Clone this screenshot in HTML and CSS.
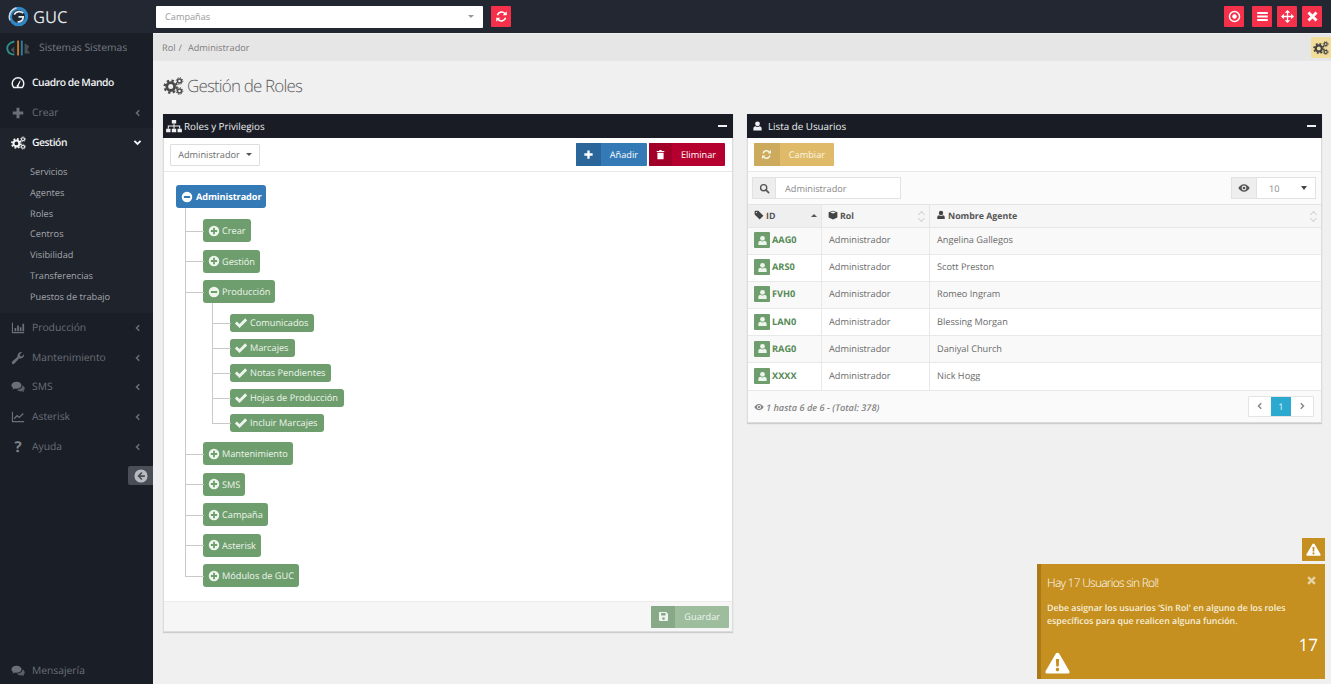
FILE: index.html
```html
<!DOCTYPE html>
<html lang="es">
<head>
<meta charset="utf-8">
<title>GUC - Gestión de Roles</title>
<link rel="stylesheet" href="styles.css">
</head>
<body>
<svg class="sprite" xmlns="http://www.w3.org/2000/svg">
  <symbol id="cogs" viewBox="0 0 20 18">
    <circle cx="7.2" cy="9.6" r="3.9" fill="none" stroke="currentColor" stroke-width="2.8"/>
    <circle cx="7.2" cy="9.6" r="6.1" fill="none" stroke="currentColor" stroke-width="2.2" stroke-dasharray="2.4 2.4"/>
    <circle cx="16" cy="4" r="2" fill="none" stroke="currentColor" stroke-width="1.5"/>
    <circle cx="16" cy="4" r="3.3" fill="none" stroke="currentColor" stroke-width="1" stroke-dasharray="1.3 1.3"/>
    <circle cx="16" cy="14" r="2" fill="none" stroke="currentColor" stroke-width="1.5"/>
    <circle cx="16" cy="14" r="3.3" fill="none" stroke="currentColor" stroke-width="1" stroke-dasharray="1.3 1.3"/>
  </symbol>
  <symbol id="gauge" viewBox="0 0 16 16">
    <path d="M3.2 13.2a6.6 6.6 0 1 1 9.6 0z" fill="none" stroke="currentColor" stroke-width="1.7" stroke-linejoin="round"/>
    <path d="M7.2 10.2 10.2 5l.9.5-2.2 5.4a1.3 1.3 0 1 1-1.7-.7z" fill="currentColor"/>
  </symbol>
  <symbol id="plus" viewBox="0 0 16 16"><path d="M6.3 2h3.4v4.3H14v3.4H9.700V14H6.300V9.700H2V6.300h4.300z" fill="currentColor"/></symbol>
  <symbol id="chart" viewBox="0 0 16 16"><path d="M1 2h1.300v10.700H15V14H1zM4 8h2v3.700H4zM7 5h2v6.700H7zM10 7h2v4.700h-2zM13 3h2v8.700h-2z" fill="currentColor"/></symbol>
  <symbol id="wrench" viewBox="0 0 16 16"><path d="M15 4.300a4.200 4.200 0 0 1-5.600 4L3.800 14.500a1.700 1.700 0 0 1-2.400-2.400L7.600 6.500a4.200 4.200 0 0 1 5-5.200L10 4l.5 1.900 1.900.5 2.400-2.700q.2.300.2.600z" fill="currentColor"/></symbol>
  <symbol id="comments" viewBox="0 0 16 16"><path d="M6.300 2C3 2 .5 3.800.5 6c0 1.200.8 2.300 2 3.100L1.700 11l2.600-1.300c.7.200 1.300.3 2 .3 3.300 0 5.700-1.800 5.700-4s-2.400-4-5.700-4z" fill="currentColor"/><path d="M13 6.200c0 2.800-3 4.700-6 4.800.8 1.200 2.600 2 4.500 2 .5 0 1-.1 1.400-.2l2.100 1-.6-1.700c.8-.7 1.300-1.500 1.300-2.500 0-1.400-1-2.600-2.700-3.400z" fill="currentColor" opacity=".8"/></symbol>
  <symbol id="line" viewBox="0 0 16 16"><path d="M1 2h1.300v10.700H15V14H1z" fill="currentColor"/><path d="M3.500 10 7 6.500l2.500 2L14 4" fill="none" stroke="currentColor" stroke-width="1.500"/></symbol>
  <symbol id="sitemap" viewBox="0 0 18 16"><path d="M6.500 1h5v4h-5zM0 11h5v4H0zM6.500 11h5v4h-5zM13 11h5v4h-5z" fill="currentColor"/><path d="M2.500 11V8h13v3M9 5v6" fill="none" stroke="currentColor" stroke-width="1.200"/></symbol>
  <symbol id="user" viewBox="0 0 16 16"><circle cx="8" cy="4.800" r="3.500" fill="currentColor"/><path d="M2 14.500v-2.700c0-2 1.400-3.200 3-3.300.8.600 1.900 1 3 1s2.200-.4 3-1c1.600.1 3 1.300 3 3.300v2.700z" fill="currentColor"/></symbol>
  <symbol id="refresh" viewBox="0 0 16 16"><path d="M3 6.500A5.300 5.300 0 0 1 12.300 4.500M13 9.500A5.300 5.300 0 0 1 3.700 11.500" fill="none" stroke="currentColor" stroke-width="2"/><path d="M14.500 1.500v5h-5zM1.500 14.500v-5h5z" fill="currentColor"/></symbol>
  <symbol id="trash" viewBox="0 0 16 16"><path d="M2.500 3H6l.5-1.500h3L10 3h3.500v1.500h-11zM3.500 5.500h9V14a1 1 0 0 1-1 1h-7a1 1 0 0 1-1-1z" fill="currentColor"/></symbol>
  <symbol id="check" viewBox="0 0 16 16"><path d="M1 8.500 3.300 6.200 6.300 9.200 12.800 2.700 15 5 6.300 13.700z" fill="currentColor"/></symbol>
  <symbol id="pluscircle" viewBox="0 0 16 16"><path fill-rule="evenodd" d="M8 1a7 7 0 1 1 0 14A7 7 0 0 1 8 1zM6.800 3.800v3H3.800v2.400h3v3h2.400v-3h3V6.800h-3v-3z" fill="currentColor"/></symbol>
  <symbol id="minuscircle" viewBox="0 0 16 16"><path fill-rule="evenodd" d="M8 1a7 7 0 1 1 0 14A7 7 0 0 1 8 1zM3.800 6.800v2.400h8.400V6.800z" fill="currentColor"/></symbol>
  <symbol id="search" viewBox="0 0 16 16"><circle cx="6.800" cy="6.800" r="4.500" fill="none" stroke="currentColor" stroke-width="2"/><path d="m10 10 4 4" stroke="currentColor" stroke-width="2.400" stroke-linecap="round"/></symbol>
  <symbol id="eye" viewBox="0 0 16 16"><path fill-rule="evenodd" d="M8 3c3.500 0 6 2.500 7.500 5C14 10.500 11.500 13 8 13S2 10.500.5 8C2 5.500 4.500 3 8 3zm0 1.800a3.200 3.200 0 1 0 0 6.400 3.200 3.200 0 0 0 0-6.400z" fill="currentColor"/><circle cx="8" cy="8" r="1.800" fill="currentColor"/></symbol>
  <symbol id="tag" viewBox="0 0 16 16"><path d="M1 2.500A1.500 1.500 0 0 1 2.500 1H7l8 8-6 6-8-8zM4 3a1 1 0 1 0 0 2.200A1 1 0 0 0 4 3z" fill="currentColor" fill-rule="evenodd"/></symbol>
  <symbol id="cube" viewBox="0 0 16 16"><path d="M8 1 15 3.500V12L8 15 1 12V3.500zM3.500 4 8 5.700 12.500 4 8 2.400z" fill="currentColor" fill-rule="evenodd"/></symbol>
  <symbol id="save" viewBox="0 0 16 16"><path fill-rule="evenodd" d="M2.500 1.500H12L14.500 4v9.500a1 1 0 0 1-1 1h-11a1 1 0 0 1-1-1v-11a1 1 0 0 1 1-1zM4.500 2.800v3.700h6.500V2.800zM8 9a2 2 0 1 0 0 4 2 2 0 0 0 0-4z" fill="currentColor"/></symbol>
  <symbol id="warn" viewBox="0 0 18 16"><path fill-rule="evenodd" d="M9 .5c.6 0 1 .3 1.300.8l7.300 12.500c.5 1 0 1.900-1.200 1.900H1.600C.4 15.700-.1 14.800.4 13.800L7.700 1.300C8 .8 8.400.5 9 .5zM7.800 5l.3 5.600h1.800L10.200 5zM9 11.500a1.300 1.300 0 1 0 0 2.600 1.300 1.300 0 0 0 0-2.600z" fill="currentColor"/></symbol>
  <symbol id="target" viewBox="0 0 16 16"><circle cx="8" cy="8" r="6.200" fill="none" stroke="currentColor" stroke-width="1.800"/><circle cx="8" cy="8" r="2.800" fill="currentColor"/></symbol>
  <symbol id="bars" viewBox="0 0 16 16"><path d="M1.500 2.500h13v2.400h-13zM1.500 6.800h13v2.400h-13zM1.500 11.100h13v2.400h-13z" fill="currentColor"/></symbol>
  <symbol id="move" viewBox="0 0 16 16"><path d="M8 0l3.500 3.500H8.800v3.700h3.700V4.500L16 8l-3.500 3.500V8.800H8.800v3.700h2.700L8 16l-3.500-3.500h2.700V8.800H3.500v2.700L0 8l3.500-3.500v2.700h3.700V3.500H4.500z" fill="currentColor"/></symbol>
  <symbol id="times" viewBox="0 0 16 16"><path d="M4.300 1.800 8 5.500l3.700-3.700 2.500 2.500L10.500 8l3.700 3.700-2.500 2.500L8 10.500l-3.700 3.700-2.500-2.500L5.500 8 1.800 4.300z" fill="currentColor"/></symbol>
  <symbol id="left" viewBox="0 0 16 16"><path d="M10.500 2.500 5 8l5.500 5.500" fill="none" stroke="currentColor" stroke-width="3"/></symbol>
  <symbol id="right" viewBox="0 0 16 16"><path d="M5.500 2.500 11 8l-5.500 5.500" fill="none" stroke="currentColor" stroke-width="3"/></symbol>
  <symbol id="down" viewBox="0 0 16 16"><path d="M2.500 5 8 10.500 13.500 5" fill="none" stroke="currentColor" stroke-width="3.400"/></symbol>
  <symbol id="back" viewBox="0 0 16 16"><path fill-rule="evenodd" d="M8 .5a7.500 7.500 0 1 1 0 15 7.500 7.500 0 0 1 0-15zM8.400 3.400 3.800 8l4.600 4.600 1.300-1.300-2.300-2.300h5V7h-5l2.300-2.300z" fill="currentColor"/></symbol>
</svg>

<div class="app">
  <header class="topbar">
    <div class="brand">
      <svg class="brand-logo" viewBox="0 0 24 22"><circle cx="12" cy="11" r="8.500" fill="none" stroke="#2f86c5" stroke-width="3.400"/><path d="M3 15C1 10 4 3 10 2" fill="none" stroke="#cfd6de" stroke-width="1.600"/><path d="M17 7.500A6 6 0 0 0 7.500 9" fill="none" stroke="#e8edf2" stroke-width="1.800"/><path d="M12 11.500h5c0 4-3.500 5.500-6 5" fill="none" stroke="#e8edf2" stroke-width="1.800"/></svg>
      <span class="brand-name">GUC</span>
    </div>
    <div class="camp-select"><span>Campañas</span><i class="caret caret-light"></i></div>
    <button class="tbtn tbtn-refresh"><svg class="i i13"><use href="#refresh"/></svg></button>
    <div class="top-actions">
      <button class="tbtn tbtn-first"><svg class="i i13"><use href="#target"/></svg></button>
      <button class="tbtn"><svg class="i i13"><use href="#bars"/></svg></button>
      <button class="tbtn"><svg class="i i13"><use href="#move"/></svg></button>
      <button class="tbtn"><svg class="i i13"><use href="#times"/></svg></button>
    </div>
  </header>

  <aside class="sidebar">
    <div class="profile">
      <svg class="avatar" viewBox="0 0 28 18"><path d="M9 2C3 3 0 8 2 12c1 3 4 4 7 4" fill="none" stroke="#2f8f8a" stroke-width="2"/><rect x="12" y="1" width="2" height="16" fill="#d07a2a"/><rect x="16" y="1" width="2" height="16" fill="#2f7f9f"/><path d="M5 11l4-4v8zM20 4l5 3-2 4 3 4h-6z" fill="#4a4f52"/></svg>
      <span>Sistemas Sistemas</span>
    </div>
    <nav class="nav">
      <a class="nav-item active"><svg class="i nav-i"><use href="#gauge"/></svg><span>Cuadro de Mando</span></a>
      <a class="nav-item"><svg class="i nav-i"><use href="#plus"/></svg><span>Crear</span><svg class="i chev"><use href="#left"/></svg></a>
      <a class="nav-item active open"><svg class="i nav-i nav-cog"><use href="#cogs"/></svg><span>Gestión</span><svg class="i chev"><use href="#down"/></svg></a>
      <ul class="subnav">
        <li>Servicios</li><li>Agentes</li><li>Roles</li><li>Centros</li><li>Visibilidad</li><li>Transferencias</li><li>Puestos de trabajo</li>
      </ul>
      <a class="nav-item"><svg class="i nav-i"><use href="#chart"/></svg><span>Producción</span><svg class="i chev"><use href="#left"/></svg></a>
      <a class="nav-item"><svg class="i nav-i"><use href="#wrench"/></svg><span>Mantenimiento</span><svg class="i chev"><use href="#left"/></svg></a>
      <a class="nav-item"><svg class="i nav-i"><use href="#comments"/></svg><span>SMS</span><svg class="i chev"><use href="#left"/></svg></a>
      <a class="nav-item"><svg class="i nav-i"><use href="#line"/></svg><span>Asterisk</span><svg class="i chev"><use href="#left"/></svg></a>
      <a class="nav-item"><b class="nav-q">?</b><span>Ayuda</span><svg class="i chev"><use href="#left"/></svg></a>
    </nav>
    <div class="collapse"><svg class="i i14"><use href="#back"/></svg></div>
    <a class="nav-item nav-bottom"><svg class="i nav-i"><use href="#comments"/></svg><span>Mensajería</span></a>
  </aside>

  <main class="main">
    <div class="crumbs"><span>Rol</span><span class="crumb-sep">/</span><span>Administrador</span></div>
    <div class="settings-tab"><svg class="i cog-tab"><use href="#cogs"/></svg></div>
    <h1 class="title"><svg class="i title-i"><use href="#cogs"/></svg><span>Gestión de Roles</span></h1>

    <div class="panels">
      <section class="panel">
        <div class="panel-head"><svg class="i head-i-wide"><use href="#sitemap"/></svg><span>Roles y Privilegios</span><span class="dash"></span></div>
        <div class="toolbar toolbar-split">
          <button class="dropdown"><span>Administrador</span><i class="caret"></i></button>
          <div class="btn-row">
            <button class="lbtn lbtn-blue"><span class="lbtn-ic"><svg class="i i11"><use href="#plus"/></svg></span><span class="lbtn-tx">Añadir</span></button>
            <button class="lbtn lbtn-red"><span class="lbtn-ic"><svg class="i i11"><use href="#trash"/></svg></span><span class="lbtn-tx">Eliminar</span></button>
          </div>
        </div>
        <div class="tree">
          <span class="node node-root"><svg class="i i12"><use href="#minuscircle"/></svg>Administrador</span>
          <ul class="tree-l1">
            <li><span class="node"><svg class="i i12"><use href="#pluscircle"/></svg>Crear</span></li>
            <li><span class="node"><svg class="i i12"><use href="#pluscircle"/></svg>Gestión</span></li>
            <li><span class="node"><svg class="i i12"><use href="#minuscircle"/></svg>Producción</span>
              <ul class="tree-l2">
                <li><span class="node node-leaf"><svg class="i i14"><use href="#check"/></svg>Comunicados</span></li>
                <li><span class="node node-leaf"><svg class="i i14"><use href="#check"/></svg>Marcajes</span></li>
                <li><span class="node node-leaf"><svg class="i i14"><use href="#check"/></svg>Notas Pendientes</span></li>
                <li><span class="node node-leaf"><svg class="i i14"><use href="#check"/></svg>Hojas de Producción</span></li>
                <li><span class="node node-leaf"><svg class="i i14"><use href="#check"/></svg>Incluir Marcajes</span></li>
              </ul>
            </li>
            <li><span class="node"><svg class="i i12"><use href="#pluscircle"/></svg>Mantenimiento</span></li>
            <li><span class="node"><svg class="i i12"><use href="#pluscircle"/></svg>SMS</span></li>
            <li><span class="node"><svg class="i i12"><use href="#pluscircle"/></svg>Campaña</span></li>
            <li><span class="node"><svg class="i i12"><use href="#pluscircle"/></svg>Asterisk</span></li>
            <li><span class="node"><svg class="i i12"><use href="#pluscircle"/></svg>Módulos de GUC</span></li>
          </ul>
        </div>
        <div class="panel-foot">
          <button class="lbtn lbtn-green"><span class="lbtn-ic"><svg class="i i11"><use href="#save"/></svg></span><span class="lbtn-tx">Guardar</span></button>
        </div>
      </section>

      <section class="panel panel-users">
        <div class="panel-head"><svg class="i head-i"><use href="#user"/></svg><span>Lista de Usuarios</span><span class="dash"></span></div>
        <div class="toolbar">
          <button class="lbtn lbtn-gold"><span class="lbtn-ic"><svg class="i i11"><use href="#refresh"/></svg></span><span class="lbtn-tx">Cambiar</span></button>
        </div>
        <div class="filters">
          <div class="igroup igroup-search"><span class="addon"><svg class="i i11"><use href="#search"/></svg></span><span class="ifield">Administrador</span></div>
          <div class="igroup igroup-len"><span class="addon"><svg class="i i12"><use href="#eye"/></svg></span><span class="ifield">10<i class="caret caret-dark"></i></span></div>
        </div>
        <table class="grid">
          <thead>
            <tr>
              <th class="col-id sorted"><svg class="i i10"><use href="#tag"/></svg>ID<i class="sort-up"></i></th>
              <th class="col-rol"><svg class="i i10"><use href="#cube"/></svg>Rol<i class="sort-both"></i></th>
              <th><svg class="i i10"><use href="#user"/></svg>Nombre Agente<i class="sort-both"></i></th>
            </tr>
          </thead>
          <tbody>
            <tr><td class="cell-id"><span class="uic"><svg class="i i11"><use href="#user"/></svg></span>AAG0</td><td>Administrador</td><td>Angelina Gallegos</td></tr>
            <tr><td class="cell-id"><span class="uic"><svg class="i i11"><use href="#user"/></svg></span>ARS0</td><td>Administrador</td><td>Scott Preston</td></tr>
            <tr><td class="cell-id"><span class="uic"><svg class="i i11"><use href="#user"/></svg></span>FVH0</td><td>Administrador</td><td>Romeo Ingram</td></tr>
            <tr><td class="cell-id"><span class="uic"><svg class="i i11"><use href="#user"/></svg></span>LAN0</td><td>Administrador</td><td>Blessing Morgan</td></tr>
            <tr><td class="cell-id"><span class="uic"><svg class="i i11"><use href="#user"/></svg></span>RAG0</td><td>Administrador</td><td>Daniyal Church</td></tr>
            <tr><td class="cell-id"><span class="uic"><svg class="i i11"><use href="#user"/></svg></span>XXXX</td><td>Administrador</td><td>Nick Hogg</td></tr>
          </tbody>
        </table>
        <div class="table-foot">
          <span class="count"><svg class="i i10"><use href="#eye"/></svg>1 hasta 6 de 6 - (Total: 378)</span>
          <div class="pager"><span class="pg"><svg class="i i8"><use href="#left"/></svg></span><span class="pg pg-on">1</span><span class="pg"><svg class="i i8"><use href="#right"/></svg></span></div>
        </div>
      </section>
    </div>

    <div class="alert-flag"><svg class="i flag-i"><use href="#warn"/></svg></div>
    <div class="alert">
      <div class="alert-title">Hay 17 Usuarios sin Rol!</div>
      <svg class="i alert-x"><use href="#times"/></svg>
      <p class="alert-text">Debe asignar los usuarios 'Sin Rol' en alguno de los roles específicos para que realicen alguna función.</p>
      <div class="alert-foot"><svg class="i alert-warn"><use href="#warn"/></svg><span class="alert-num">17</span></div>
    </div>
  </main>
</div>
</body>
</html>
```
FILE: styles.css
```css
* { box-sizing: border-box; }
html, body { margin: 0; height: 100%; overflow: hidden; }
body { font-family: "Open Sans", "Liberation Sans", sans-serif; font-size: 9.200px; color: #6a6a6a; background: #f0f0f0; text-rendering: geometricPrecision; }
button { font: inherit; border: 0; padding: 0; cursor: pointer; text-rendering: inherit; }
ul { list-style: none; margin: 0; padding: 0; }
.sprite { display: none; }
.i { display: block; flex: none; fill: currentColor; }
.i8 { width: 8px; height: 8px; }
.i10 { width: 10px; height: 10px; }
.i11 { width: 11px; height: 11px; }
.i12 { width: 12px; height: 12px; }
.i13 { width: 13px; height: 13px; }
.i14 { width: 14px; height: 14px; }

.app { display: grid; grid-template-columns: 153px 1fr; grid-template-rows: 33px 1fr; width: 1331px; height: 684px; }

/* top bar */
.topbar { grid-column: 1 / 3; display: flex; align-items: center; background: #222731; }
.brand { width: 156px; display: flex; align-items: center; padding-left: 7px; gap: 3px; color: #e4e8ec; }
.brand-logo { width: 23px; height: 21px; }
.brand-name { font-size: 16.500px; font-weight: 400; }
.camp-select { width: 327px; height: 22px; background: #fff; border-radius: 1px; display: flex; align-items: center; justify-content: space-between; padding: 0 9px; color: #9a9a9a; }
.caret { display: inline-block; width: 0; height: 0; border-left: 3px solid transparent; border-right: 3px solid transparent; border-top: 3px solid #555; }
.caret-light { border-top-color: #999; }
.tbtn { width: 20px; height: 21px; background: #f5304a; color: #fff; display: flex; align-items: center; justify-content: center; border-radius: 1px; }
.tbtn-refresh { margin-left: 8px; }
.top-actions { margin-left: auto; margin-right: 9px; display: flex; gap: 5px; }
.tbtn-first { margin-right: 3px; }

/* sidebar */
.sidebar { background: #1a1e27; display: flex; flex-direction: column; position: relative; }
.profile { height: 35px; padding: 0 0 0 6px; display: flex; align-items: center; gap: 7px; color: #777c83; font-size: 10.300px; }
.avatar { width: 26px; height: 18px; flex: none; margin-top: -5px; }
.profile span { margin-top: -5px; }
.nav { display: flex; flex-direction: column; }
.nav-item { height: 29.900px; display: flex; align-items: center; padding: 0 11px; color: #6b7078; font-size: 10.300px; }
.nav-item > span { margin-left: 7px; }
.nav-i { width: 14px; height: 14px; }
.nav-cog { width: 15px; height: 14px; margin-right: -1px; }
.nav-q { width: 14px; text-align: center; font-size: 15px; font-weight: 700; line-height: 1; color: #80858c; }
.nav-item.active { color: #f2f3f4; font-weight: 600; letter-spacing: -.45px; }
.open, .subnav { background: #1f232c; }
.chev { width: 8px; height: 8px; margin-left: auto; }
.open .chev { width: 9px; height: 9px; }
.subnav { padding: 3.500px 0 0 30px; height: 155px; color: #a3a6ab; }
.subnav li { height: 20.800px; display: flex; align-items: center; }
.collapse { position: absolute; right: 0; top: 433px; width: 25px; height: 19px; background: #4a4e56; color: #b8bbc0; display: flex; align-items: center; justify-content: center; border-radius: 2px 0 0 2px; }
.nav-bottom { margin-top: auto; margin-bottom: -2px; }

/* main */
.main { position: relative; display: flex; flex-direction: column; min-width: 0; background: #f0f0f0; }
.crumbs { flex: none; height: 27px; margin-top: 1px; background: #e6e6e6; display: flex; align-items: center; padding-left: 9px; gap: 3px; color: #7d7d7d; }
.crumb-sep { margin-right: 3px; }
.settings-tab { position: absolute; right: 0; top: 4px; width: 20px; height: 21px; background: #f3dd9a; color: #444; display: flex; align-items: center; justify-content: center; border-radius: 2px 0 0 2px; }
.cog-tab { width: 16px; height: 14px; }
.title { flex: none; margin: 0; height: 53px; padding: 0 0 4px 10px; display: flex; align-items: center; gap: 3px; font-weight: 300; font-size: 17px; color: #5c5c5c; letter-spacing: -.85px; }
.title-i { width: 21px; height: 18px; color: #4a4a4a; }
.panels { display: grid; grid-template-columns: 570px 575px; gap: 14px; padding-left: 10px; align-items: start; }

.panel { background: #fff; border: 1px solid #dcdcdc; border-top: 0; box-shadow: 0 1px 1px #ccc; color: #6a6a6a; }
.panel-head { height: 24px; margin: 0 -1px; background: #191c24; color: #eef0f2; font-size: 9.800px; font-weight: 500; display: flex; align-items: center; padding: 0 6px 0 3px; gap: 2px; }
.panel-users .panel-head { padding-left: 5px; gap: 5px; }
.head-i-wide { width: 16px; height: 14px; }
.head-i { width: 11px; height: 12px; }
.dash { margin-left: auto; width: 9px; height: 2px; background: #eef0f2; }
.toolbar { height: 34px; display: flex; align-items: center; padding: 0 6px; border-bottom: 1px solid #e8e8e8; }
.toolbar-split { justify-content: space-between; padding-right: 7px; }
.dropdown { width: 90px; height: 22px; background: #fff; border: 1px solid #dedede; color: #6d6d6d; display: flex; align-items: center; justify-content: center; gap: 6px; border-radius: 1px; }
.btn-row { display: flex; gap: 2px; }
.lbtn { display: flex; height: 23px; border-radius: 1px; overflow: hidden; color: #fff; }
.lbtn-ic { width: 26px; display: flex; align-items: center; justify-content: center; }
.lbtn-tx { display: flex; align-items: center; padding: 0 9px; flex: 1; justify-content: center; }
.lbtn-blue { width: 71px; background: #337ab7; }
.lbtn-blue .lbtn-ic { background: #2a6699; }
.lbtn-red { width: 76px; background: #b5002f; }
.lbtn-red .lbtn-ic { background: #a10029; }
.lbtn-gold { width: 80px; background: #dfbb69; color: #faf5e5; }
.lbtn-gold .lbtn-ic { background: #ccaa5e; }
.lbtn-green { width: 78px; height: 22px; background: #9dbd9d; color: #eef4ee; }
.lbtn-green .lbtn-ic { background: #88a988; }

/* tree */
.tree { padding: 13px 0 14px 12px; }
.node { display: inline-flex; align-items: center; gap: 2px; height: 23px; padding: 0 5px; background: #6e9e6e; color: #eef5ec; border-radius: 3px; }
.node-root { background: #337ab7; color: #fff; font-weight: 700; gap: 3px; letter-spacing: -.1px; }
.node-leaf { height: 18px; padding: 0 6px 0 4px; }
.tree li { position: relative; display: flex; flex-direction: column; align-items: flex-start; }
.tree > .node { display: flex; width: max-content; }
.tree-l1 { padding: 3.500px 0 0 27px; }
.tree-l1 > li { padding-top: 7.500px; }
.tree-l1 > li::before, .tree-l2 > li::before { content: ""; position: absolute; left: -18px; top: 0; width: 18px; height: 19px; border-left: 1.500px solid #c9c9c9; border-bottom: 1.500px solid #c9c9c9; }
.tree-l1 > li:first-child::before { top: -3.500px; height: 22.500px; }
.tree-l1 > li:not(:last-child)::after, .tree-l2 > li:not(:last-child)::after { content: ""; position: absolute; left: -18px; top: 18px; bottom: 0; border-left: 1.500px solid #c9c9c9; }
.tree-l2 { padding: 3.500px 0 3px 27px; }
.tree-l2 > li { padding-top: 7px; }
.tree-l2 > li::before { height: 16px; }
.tree-l2 > li:first-child::before { top: -4px; height: 20px; }
.tree-l2 > li:not(:last-child)::after { top: 15px; }
.panel-foot { height: 30px; background: #f7f6f6; border-top: 1px solid #ecebeb; display: flex; align-items: center; justify-content: flex-end; padding-right: 3px; }

/* table */
.filters { height: 32px; background: #fbfbfb; display: flex; align-items: center; justify-content: space-between; padding: 0 5px 0 4px; }
.igroup { display: flex; height: 22px; border: 1px solid #e2e2e2; background: #fff; }
.igroup-search { width: 149px; }
.igroup-len { width: 85px; }
.addon { width: 23px; background: #eee; border-right: 1px solid #e2e2e2; color: #555; display: flex; align-items: center; justify-content: center; flex: none; }
.igroup-len .addon { width: 25px; }
.ifield { flex: 1; display: flex; align-items: center; justify-content: space-between; padding: 0 8px 0 9px; color: #8a8a8a; }
.igroup-len .ifield { padding-left: 12px; }
.caret-dark { border-top-color: #444; border-top-width: 4px; }
.grid { width: 100%; border-collapse: collapse; table-layout: fixed; }
.grid th { position: relative; height: 22.500px; text-align: left; font-weight: 700; color: #555; background: #f6f6f6; padding: 0 6px; border-top: 1px solid #e4e4e4; border-bottom: 1px solid #e6e6e6; border-right: 1px solid #e6e6e6; white-space: nowrap; font-size: 8.800px; }
.grid th:last-child, .grid td:last-child { border-right: 0; }
.grid th .i { display: inline-block; vertical-align: -1.500px; margin-right: 2px; color: #444; }
.col-id { width: 73.500px; }
.col-rol { width: 108px; }
.sorted { background: #efefef !important; }
.sort-up { position: absolute; right: 4px; top: 9px; width: 0; height: 0; border-left: 3px solid transparent; border-right: 3px solid transparent; border-bottom: 3px solid #555; }
.sort-both { position: absolute; right: 4px; top: 6px; width: 7px; height: 11px; }
.sort-both::before, .sort-both::after { content: ""; position: absolute; left: 1px; width: 4px; height: 4px; border: solid #d2d2d2; border-width: 1px 0 0 1px; transform: rotate(45deg); }
.sort-both::before { top: 1px; }
.sort-both::after { bottom: 1px; transform: rotate(225deg); }
.grid td { height: 27.200px; padding: 0 6px 2px 7px; border-bottom: 1px solid #e8e8e8; border-right: 1px solid #e8e8e8; white-space: nowrap; color: #6a6a6a; }
.grid tbody tr:nth-child(odd) td { background: #f9f9f9; }
.grid td.cell-id { font-weight: 700; color: #568a56; padding: 0 0 1px 6px; line-height: 16px; }
.uic { display: inline-flex; vertical-align: top; width: 16px; height: 16px; margin-right: 2px; background: #6e9e6e; color: #eef5ec; align-items: center; justify-content: center; border-radius: 1px; }
.table-foot { height: 31px; background: #fafafa; display: flex; align-items: center; justify-content: space-between; padding: 0 7px 0 6px; }
.count { display: flex; align-items: center; gap: 2px; font-style: italic; font-weight: 600; color: #858585; padding-top: 2px; }
.pager { display: flex; border: 1px solid #e4e4e4; height: 21px; background: #fff; border-radius: 1px; }
.pg { width: 22px; display: flex; align-items: center; justify-content: center; color: #888; }
.pg-on { width: 20px; background: #2ba9cf; color: #e8f6fa; }

/* notifications */
.alert-flag { position: absolute; right: 6px; top: 505px; width: 23px; height: 23px; background: #c5901f; color: #fff; display: flex; align-items: center; justify-content: center; }
.flag-i { width: 15px; height: 13px; }
.alert { position: absolute; right: 6px; top: 531px; width: 288px; height: 115px; background: #c5901f; border-left: 4px solid #a97a16; color: #f7efdc; padding: 11px 7px 0 6px; }
.alert-title { font-size: 12px; font-weight: 300; letter-spacing: -.75px; line-height: 16px; color: #fff; }
.alert-x { position: absolute; right: 8px; top: 11px; width: 11px; height: 11px; color: #e6d3a5; }
.alert-text { margin: 11px 0 0; font-size: 8.800px; font-weight: 600; line-height: 13px; }
.alert-foot { position: absolute; left: 4px; right: 7px; bottom: 5px; display: flex; align-items: flex-end; justify-content: space-between; }
.alert-warn { width: 25px; height: 22px; color: #fff; }
.alert-num { font-size: 17px; margin-bottom: 18px; color: #fff; }
```
